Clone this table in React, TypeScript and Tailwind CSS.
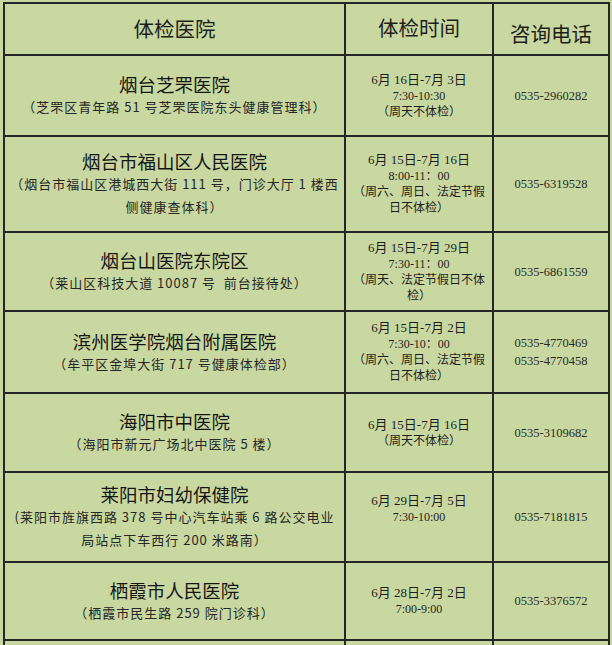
const rows = [
  {
    name: "烟台芝罘医院",
    addr: ["（芝罘区青年路 51 号芝罘医院东头健康管理科）"],
    time: ["6月 16日-7月 3日", "7:30-10:30", "（周天不体检）"],
    phone: ["0535-2960282"],
  },
  {
    name: "烟台市福山区人民医院",
    addr: ["（烟台市福山区港城西大街 111 号，门诊大厅 1 楼西", "侧健康查体科）"],
    time: ["6月 15日-7月 16日", "8:00-11：00", "（周六、周日、法定节假", "日不体检）"],
    phone: ["0535-6319528"],
  },
  {
    name: "烟台山医院东院区",
    addr: ["（莱山区科技大道 10087 号  前台接待处）"],
    time: ["6月 15日-7月 29日", "7:30-11：00", "（周天、法定节假日不体", "检）"],
    phone: ["0535-6861559"],
  },
  {
    name: "滨州医学院烟台附属医院",
    addr: ["（牟平区金埠大街 717 号健康体检部）"],
    time: ["6月 15日-7月 2日", "7:30-10：00", "（周六、周日、法定节假", "日不体检）"],
    phone: ["0535-4770469", "0535-4770458"],
  },
  {
    name: "海阳市中医院",
    addr: ["（海阳市新元广场北中医院 5 楼）"],
    time: ["6月 15日-7月 16日", "（周天不体检）"],
    phone: ["0535-3109682"],
  },
  {
    name: "莱阳市妇幼保健院",
    addr: ["(莱阳市旌旗西路 378 号中心汽车站乘 6 路公交电业", "局站点下车西行 200 米路南）"],
    time: ["6月 29日-7月 5日", "7:30-10:00"],
    phone: ["0535-7181815"],
    timePad: true,
  },
  {
    name: "栖霞市人民医院",
    addr: ["（栖霞市民生路 259 院门诊科）"],
    time: ["6月 28日-7月 2日", "7:00-9:00"],
    phone: ["0535-3376572"],
  },
];

const cell = "bg-[#c9d8a0] flex flex-col items-center justify-center text-center";
const cjk = "font-['Noto_Sans_CJK_SC',sans-serif]";
const serif = "font-['Liberation_Serif','Noto_Sans_CJK_SC',serif]";

export default function App() {
  return (
    <div className="h-[645px] w-[612px] overflow-hidden bg-[#c9d8a0] pl-[3px] pt-[2px]">
      <div className="grid w-fit grid-cols-[339px_146px_114px] grid-rows-[50px_79px_94px_77px_80px_77px_88px_76px_80px] gap-[2px] bg-[#262626] p-[2px]">
        <div className={`${cell} ${cjk} text-[20.5px] text-[#1e1e1e] pb-[2px]`}>体检医院</div>
        <div className={`${cell} ${cjk} text-[20.5px] text-[#1e1e1e] pb-[4px]`}>体检时间</div>
        <div className={`${cell} ${cjk} text-[20.5px] text-[#1e1e1e] pt-[8px]`}>咨询电话</div>

        {rows.map((r) => (
          <>
            <div key={r.name + "a"} className={cell}>
              <p className={`${cjk} text-[18.5px] leading-[22px] text-[#161616]`}>{r.name}</p>
              {r.addr.map((line) => (
                <p
                  key={line}
                  className={`${cjk} whitespace-pre text-[13px] leading-[23px] tracking-[1px] text-[#262626]`}
                >
                  {line}
                </p>
              ))}
            </div>
            <div key={r.name + "b"} className={`${cell} ${r.timePad ? "pb-[16px]" : ""}`}>
              {r.time.map((line, i) => (
                <p
                  key={line}
                  className={`${serif} whitespace-pre leading-[16px] text-[#1e1e1e] ${
                    i === 0 ? "text-[13px]" : "text-[12px]"
                  }`}
                >
                  {line}
                </p>
              ))}
            </div>
            <div key={r.name + "c"} className={cell}>
              {r.phone.map((p) => (
                <p key={p} className={`${serif} text-[12.5px] leading-[18px] text-[#2a2a2a]`}>
                  {p}
                </p>
              ))}
            </div>
          </>
        ))}

        <div className={cell} />
        <div className={cell} />
        <div className={cell} />
      </div>
    </div>
  );
}
